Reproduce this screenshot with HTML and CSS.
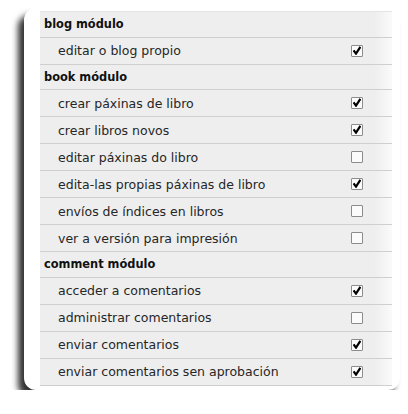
FILE: index.html
```html
<!DOCTYPE html>
<html lang="gl">
<head>
<meta charset="utf-8">
<title>Permisos</title>
<link rel="stylesheet" href="styles.css">
</head>
<body>
<div class="card">
  <div class="table">
    <div class="row module">blog módulo</div>
    <div class="row perm"><span class="label">editar o blog propio</span><span class="cb checked"></span></div>
    <div class="row module">book módulo</div>
    <div class="row perm"><span class="label">crear páxinas de libro</span><span class="cb checked"></span></div>
    <div class="row perm"><span class="label">crear libros novos</span><span class="cb checked"></span></div>
    <div class="row perm"><span class="label">editar páxinas do libro</span><span class="cb"></span></div>
    <div class="row perm"><span class="label">edita-las propias páxinas de libro</span><span class="cb checked"></span></div>
    <div class="row perm"><span class="label">envíos de índices en libros</span><span class="cb"></span></div>
    <div class="row perm"><span class="label">ver a versión para impresión</span><span class="cb"></span></div>
    <div class="row module">comment módulo</div>
    <div class="row perm"><span class="label">acceder a comentarios</span><span class="cb checked"></span></div>
    <div class="row perm"><span class="label">administrar comentarios</span><span class="cb"></span></div>
    <div class="row perm"><span class="label">enviar comentarios</span><span class="cb checked"></span></div>
    <div class="row perm"><span class="label">enviar comentarios sen aprobación</span><span class="cb checked"></span></div>
  </div>
</div>
</body>
</html>
```
FILE: styles.css
```css
html, body {
  margin: 0;
  padding: 0;
  background: #ffffff;
}
body {
  font-family: "DejaVu Sans", Verdana, sans-serif;
  color: #262626;
}
.card {
  margin: 8px 0 0 24px;
  width: 376px;
  height: 382px;
  box-sizing: border-box;
  padding: 3px 8px 0 16px;
  background: #ffffff;
  border-radius: 12px;
  box-shadow: -6px 7px 6px rgba(0, 0, 0, 0.8);
}
.table {
  border-top: 1px solid #e4e4e4;
  background: linear-gradient(to right, #eeeeee calc(100% - 18px), #fafafa);
}
.row {
  display: flex;
  align-items: center;
  box-sizing: border-box;
  border-bottom: 1px solid #cfcfcf;
}
.module {
  height: 25.5px;
  padding-left: 4px;
  font-weight: bold;
  font-size: 11.4px;
  color: #111111;
}
.perm {
  height: 27px;
  padding-left: 18px;
  padding-right: 29px;
  font-size: 12.5px;
}
.label {
  flex: 1;
}
.cb {
  width: 12px;
  height: 12px;
  box-sizing: border-box;
  border: 1px solid #8c8c8c;
  border-radius: 1px;
  background: #fbfbfb;
  position: relative;
}
.cb.checked::after {
  content: "";
  position: absolute;
  left: 1px;
  top: 0px;
  width: 8px;
  height: 9px;
  background: url("data:image/svg+xml;utf8,<svg xmlns='http://www.w3.org/2000/svg' viewBox='0 0 8 9'><path d='M0.6 4.4 L3 7.6 L7.4 0.8' fill='none' stroke='black' stroke-width='2.2' stroke-linejoin='miter'/></svg>") no-repeat;
}
```
